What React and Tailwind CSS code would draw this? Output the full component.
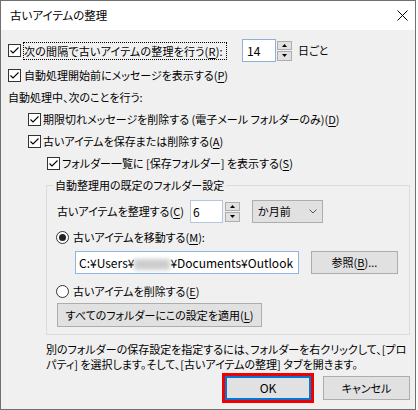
import React from "react";

// accelerator key, underlined like a Win32 dialog
const U = ({ children }) => <span className="underline underline-offset-[2px]">{children}</span>;

const Check = () => (
  <svg width="13" height="13" viewBox="0 0 13 13" className="shrink-0">
    <rect x="0.5" y="0.5" width="12" height="12" fill="#fff" stroke="#333" />
    <path d="M2.5 6.5 L5 9 L10.5 3.5" fill="none" stroke="#000" strokeWidth="1.1" />
  </svg>
);

const Radio = ({ on }) => (
  <svg width="13" height="13" viewBox="0 0 13 13" className="shrink-0">
    <circle cx="6.5" cy="6.5" r="6" fill="#fff" stroke="#333" />
    {on && <circle cx="6.5" cy="6.5" r="3.5" fill="#222" />}
  </svg>
);

const Spin = () => (
  <div className="flex flex-col gap-px w-[15px] h-[20px] shrink-0">
    <div className="flex-1 border border-[#adadad] bg-[#e1e1e1] flex items-center justify-center">
      <svg width="5" height="3" viewBox="0 0 5 3"><path d="M0 3 L2.5 0 L5 3Z" fill="#000" /></svg>
    </div>
    <div className="flex-1 border border-[#adadad] bg-[#e1e1e1] flex items-center justify-center">
      <svg width="5" height="3" viewBox="0 0 5 3"><path d="M0 0 L2.5 3 L5 0Z" fill="#000" /></svg>
    </div>
  </div>
);

const Row = ({ className = "", children }) => (
  <div className={"flex items-center h-[18px] leading-[18px] whitespace-nowrap " + className}>{children}</div>
);

export default function App() {
  return (
    <div className="bg-white w-[418px] h-[410px] font-['Noto_Sans_CJK_JP','Noto_Sans',sans-serif] [font-feature-settings:'palt'] text-[11px] text-black">
      <div className="w-[416px] h-[410px] border border-[#707070] flex flex-col">
        {/* title bar */}
        <div className="h-[29px] bg-white flex items-center justify-between pl-[9px] pr-[7px] text-[11.5px]">
          <span>古いアイテムの整理</span>
          <svg width="11" height="11" viewBox="0 0 11 11">
            <path d="M0.5 0.5 L10.5 10.5 M10.5 0.5 L0.5 10.5" stroke="#000" strokeWidth="1" />
          </svg>
        </div>

        <div className="flex-1 bg-[#f0f0f0] flex flex-col">
          <div className="flex items-center h-[23px] mt-[9px] ml-[7px] whitespace-nowrap">
            <Check />
            <span className="ml-[2px] w-[204px] h-[18px] leading-[16px] tracking-[0.2px] border border-dotted border-black">
              次の間隔で古いアイテムの整理を行う(<U>R</U>):
            </span>
            <div className="ml-[15px] w-[34px] h-[23px] bg-white border border-[#8fb0dc] pl-[4px] leading-[21px] text-[12px]">14</div>
            <div className="ml-px"><Spin /></div>
            <span className="ml-[6px]">日ごと</span>
          </div>

          <Row className="mt-[4px] ml-[7px]">
            <Check />
            <span className="ml-[3px]">自動処理開始前にメッセージを表示する(<U>P</U>)</span>
          </Row>

          <Row className="mt-[4px] ml-[7px]">
            <span>自動処理中、次のことを行う:</span>
          </Row>

          <Row className="mt-[4px] ml-[27px]">
            <Check />
            <span className="ml-[2px]">期限切れメッセージを削除する (電子メール フォルダーのみ)(<U>D</U>)</span>
          </Row>

          <Row className="mt-[4px] ml-[27px]">
            <Check />
            <span className="ml-[2px]">古いアイテムを保存または削除する(<U>A</U>)</span>
          </Row>

          <Row className="mt-[4px] ml-[46px]">
            <Check />
            <span className="ml-[2px]">フォルダー一覧に [保存フォルダー] を表示する(<U>S</U>)</span>
          </Row>

          <fieldset className="mt-[4px] ml-[45px] w-[364px] border border-[#dcdcdc] p-0 pb-[7px] whitespace-nowrap">
            <legend className="ml-[6px] px-[2px] h-[18px] leading-[18px]">自動整理用の既定のフォルダー設定</legend>

            <div className="flex items-center h-[23px] mt-[6px] pl-[10px]">
              <span className="w-[133px] shrink-0">古いアイテムを整理する(<U>C</U>)</span>
              <div className="w-[33px] h-[23px] bg-white border border-[#b7c6da] pl-[2px] leading-[21px] text-[12px]">6</div>
              <div className="ml-[2px]"><Spin /></div>
              <div className="ml-[12px] w-[71px] h-[23px] bg-[#e1e1e1] border border-[#adadad] flex items-center justify-between pl-[5px] pr-[5px]">
                <span>か月前</span>
                <svg width="8" height="5" viewBox="0 0 8 5">
                  <path d="M0.5 0.5 L4 4 L7.5 0.5" fill="none" stroke="#555" strokeWidth="1" />
                </svg>
              </div>
            </div>

            <Row className="mt-[5px] pl-[9px]">
              <Radio on />
              <span className="ml-[4px]">古いアイテムを移動する(<U>M</U>):</span>
            </Row>

            <div className="flex items-center mt-[5px] pl-[28px]">
              <div className="w-[224px] h-[23px] bg-white border border-[#8fb6e3] pl-[3px] leading-[21px] overflow-hidden text-[12px]">
                C:¥Users¥
                <span className="inline-block align-middle w-[36px] h-[11px] bg-[#cdcdcd] blur-[2px]"></span>
                ¥Documents¥Outlook
              </div>
              <div className="ml-[12px] w-[87px] h-[23px] bg-[#e1e1e1] border border-[#adadad] flex items-center justify-center">
                <span>参照(<U>B</U>)...</span>
              </div>
            </div>

            <Row className="mt-[8px] pl-[9px]">
              <Radio />
              <span className="ml-[4px]">古いアイテムを削除する(<U>E</U>)</span>
            </Row>

            <div className="mt-[3px] pl-[10px]">
              <div className="w-[205px] h-[24px] bg-[#e1e1e1] border border-[#adadad] flex items-center justify-center">
                <span>すべてのフォルダーにこの設定を適用(<U>L</U>)</span>
              </div>
            </div>
          </fieldset>

          <p className="mt-[7px] ml-[45px] leading-[15px] whitespace-nowrap">
            別のフォルダーの保存設定を指定するには、フォルダーを右クリックして、[プロ
            <br />
            パティ] を選択します。そして、[古いアイテムの整理] タブを開きます。
          </p>

          <div className="flex justify-end gap-[12px] mt-[4px] pr-[5px]">
            <div className="w-[86px] h-[24px] bg-[#e1e1e1] border-2 border-[#0078d7] shadow-[0_0_0_3px_#f00000] flex items-center justify-center text-[12px]">
              OK
            </div>
            <div className="w-[87px] h-[24px] bg-[#e1e1e1] border border-[#adadad] flex items-center justify-center">
              キャンセル
            </div>
          </div>
        </div>
      </div>
    </div>
  );
}
